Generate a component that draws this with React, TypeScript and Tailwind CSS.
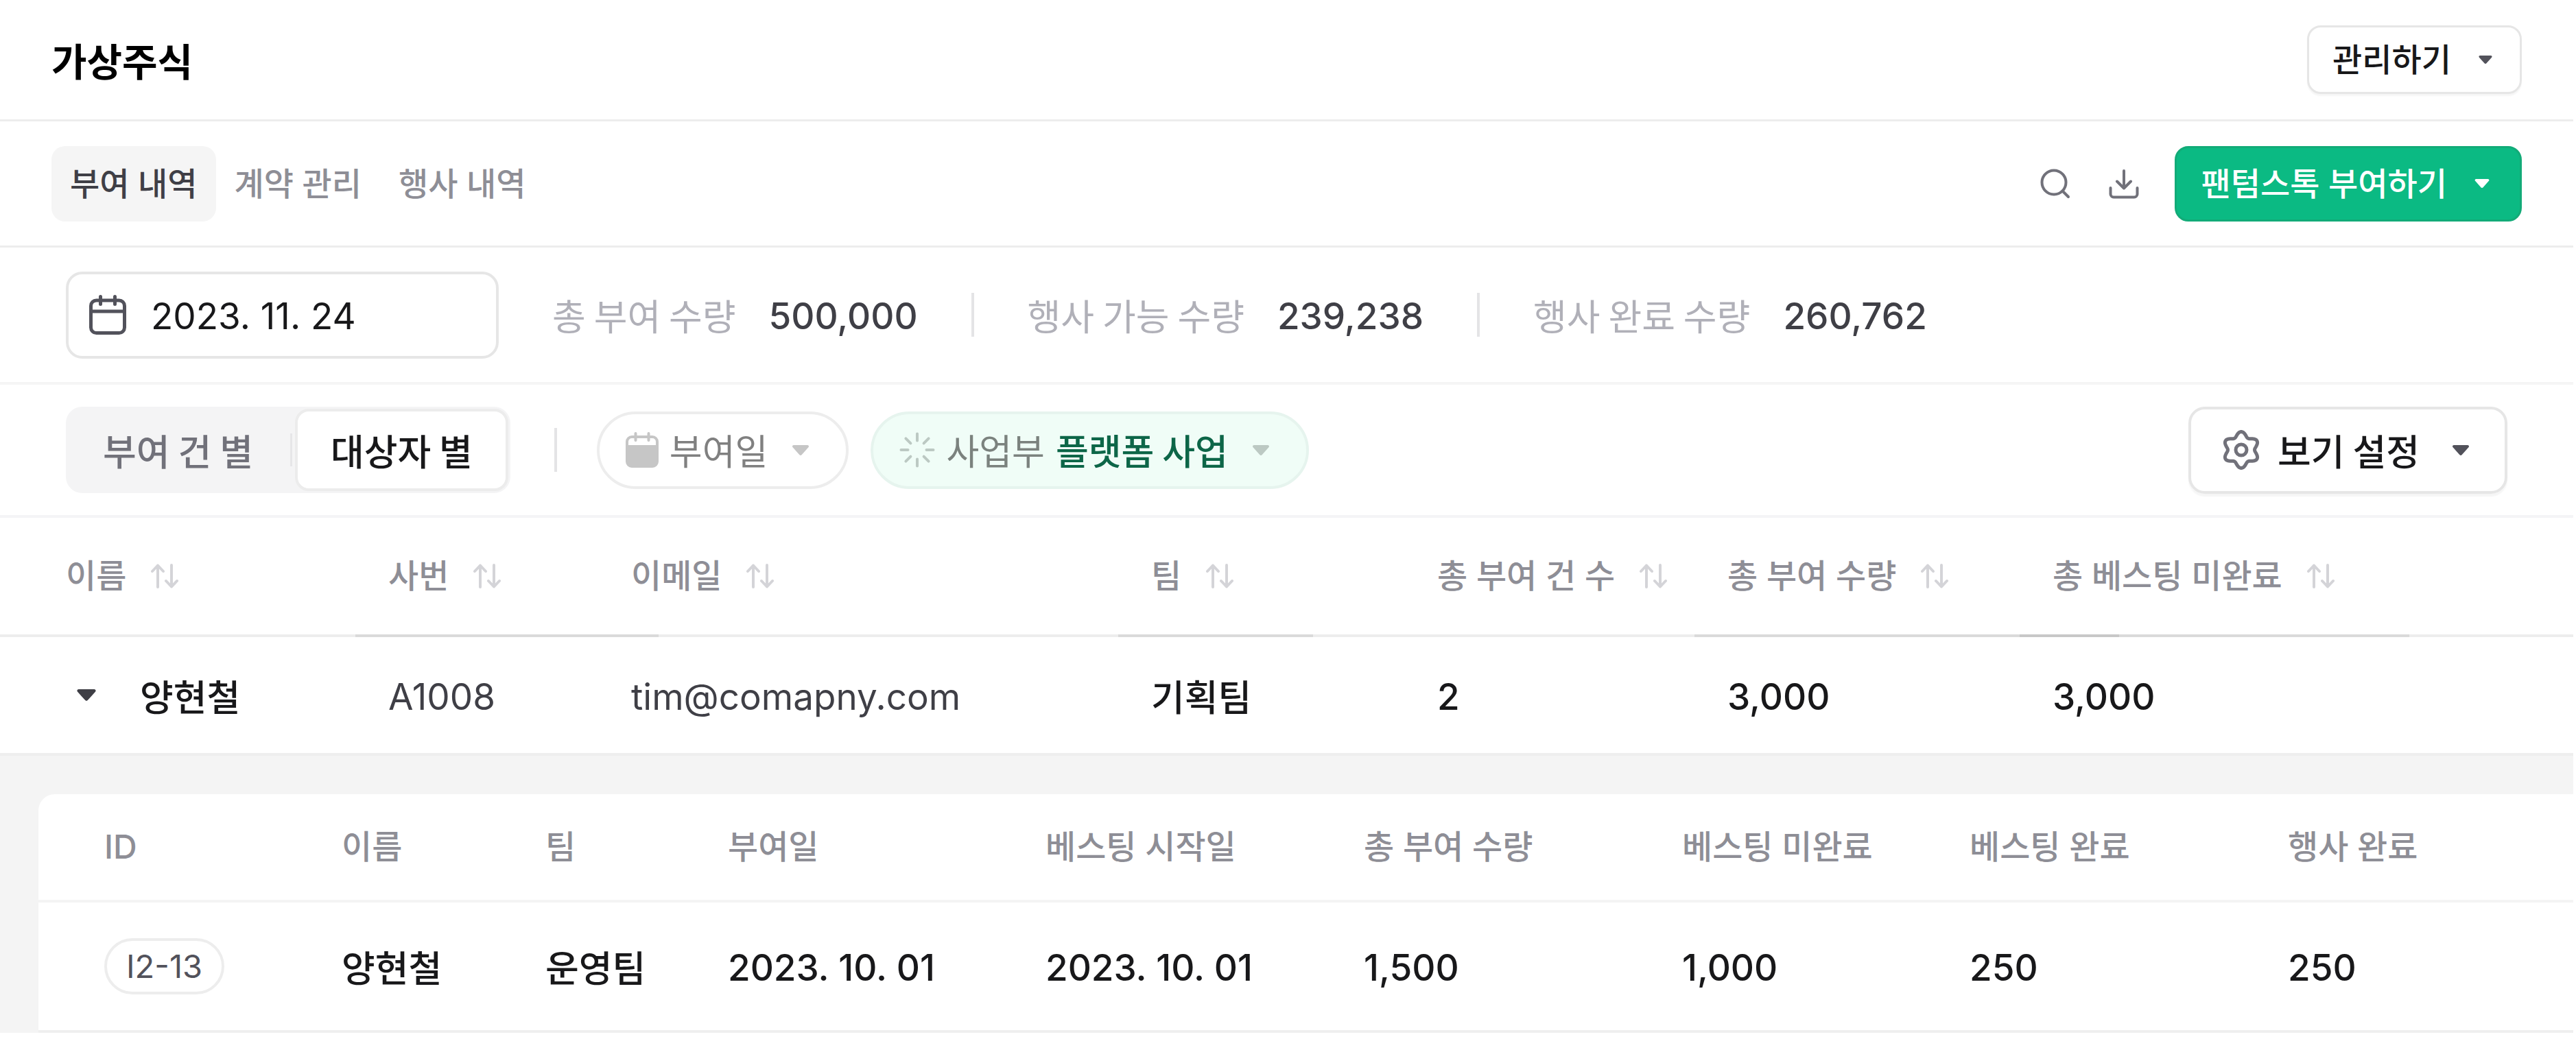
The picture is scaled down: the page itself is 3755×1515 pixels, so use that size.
import React, { ReactNode } from 'react';
import clsx from 'clsx';

// KR sets running Hangul, UI sets labels on the latin baseline, NUM is for figures
const KR = "font-['Noto_Sans_CJK_KR',sans-serif]";
const UI = "font-['Inter','Noto_Sans_CJK_KR',sans-serif]";
const NUM = "font-['Inter','Noto_Sans_CJK_KR',sans-serif] pt-1";

interface IconProps {
  className?: string;
}

const Caret: React.FC<IconProps> = ({ className }) => (
  <svg viewBox="0 0 24 15" className={clsx('flex-none', className)} fill="currentColor" aria-hidden="true">
    <path d="M2 0h20c1.800 0 2.600 2 1.400 3.300L13.800 14c-1 1.200-2.600 1.200-3.600 0L.6 3.300C-.6 2 .2 0 2 0z" />
  </svg>
);

const SearchIcon: React.FC<IconProps> = ({ className }) => (
  <svg viewBox="0 0 44 44" className={className} fill="none" stroke="currentColor" strokeWidth="4" strokeLinecap="round" aria-hidden="true">
    <circle cx="20" cy="20" r="17.500" />
    <path d="M32.500 32.500 41 41" />
  </svg>
);

const DownloadIcon: React.FC<IconProps> = ({ className }) => (
  <svg viewBox="0 0 44 44" className={className} fill="none" stroke="currentColor" strokeWidth="4" strokeLinecap="round" strokeLinejoin="round" aria-hidden="true">
    <path d="M22 3v25M12 18.500l10 10 10-10" />
    <path d="M2.500 28v9a4.500 4.500 0 0 0 4.500 4.500h30a4.500 4.500 0 0 0 4.500-4.500v-9" />
  </svg>
);

const CalendarIcon: React.FC<IconProps> = ({ className }) => (
  <svg viewBox="0 0 54 58" className={className} fill="none" stroke="currentColor" strokeWidth="5" strokeLinecap="round" aria-hidden="true">
    <rect x="2.500" y="8" width="49" height="47.500" rx="8" />
    <path d="M3 24h48" strokeLinecap="butt" />
    <path d="M16.500 2.500v11M37.500 2.500v11" />
  </svg>
);

const CalendarSolidIcon: React.FC<IconProps> = ({ className }) => (
  <svg viewBox="0 0 48 52" className={className} aria-hidden="true">
    <rect x="2" y="7" width="44" height="43" rx="7" fill="none" stroke="currentColor" strokeWidth="4" />
    <path d="M1 19h46v25a7 7 0 0 1-7 7H8a7 7 0 0 1-7-7z" fill="currentColor" />
    <path d="M14.500 2v10M33.500 2v10" stroke="currentColor" strokeWidth="4" strokeLinecap="round" />
  </svg>
);

const SpinnerIcon: React.FC<IconProps> = ({ className }) => (
  <svg viewBox="0 0 52 52" className={className} stroke="currentColor" strokeWidth="4" strokeLinecap="round" aria-hidden="true">
    <path d="M26 2.500v10M26 39.500v10M2.500 26h10M39.500 26h10M9.400 9.400l7 7M35.600 35.600l7 7M9.400 42.600l7-7M35.600 16.400l7-7" />
  </svg>
);

// Six soft lobes around the hub, first one pointing up
const gearPoints = Array.from({ length: 120 }, (_, i) => {
  const a = (i / 120) * Math.PI * 2;
  const r = 23 + 3.5 * Math.cos(6 * a);
  return `${(29 + r * Math.sin(a)).toFixed(2)},${(29 - r * Math.cos(a)).toFixed(2)}`;
}).join(' ');

const GearIcon: React.FC<IconProps> = ({ className }) => (
  <svg viewBox="0 0 58 58" className={className} fill="none" stroke="currentColor" strokeWidth="5" strokeLinejoin="round" aria-hidden="true">
    <polygon points={gearPoints} />
    <circle cx="29" cy="29" r="8" />
  </svg>
);

const SortIcon: React.FC<IconProps> = ({ className }) => (
  <svg viewBox="0 0 40 36" className={className} fill="none" stroke="currentColor" strokeWidth="4" strokeLinecap="round" strokeLinejoin="round" aria-hidden="true">
    <path d="M10 34V2.500M2 11l8-8.500L18 11" />
    <path d="M30 2v31.500M22 25l8 8.500 8-8.500" />
  </svg>
);

interface StatProps {
  label: string;
  value: string;
}

const Stat: React.FC<StatProps> = ({ label, value }) => (
  <div className="flex items-center gap-12">
    <dt className="text-[#b0b0b8]">{label}</dt>
    <dd className={clsx(NUM, 'font-medium text-[#3f3f46]')}>{value}</dd>
  </div>
);

const Divider = () => <div className="h-16 w-1 flex-none bg-[#e4e4e6]" />;

interface FilterPillProps {
  icon: ReactNode;
  active?: boolean;
  children: ReactNode;
}

const FilterPill: React.FC<FilterPillProps> = ({ icon, active = false, children }) => (
  <button
    type="button"
    aria-haspopup="listbox"
    className={clsx(
      'flex h-[113px] items-center rounded-full border-4 pl-[38px] pr-[54px] text-[52px]',
      active ? 'border-[#e6f4ee] bg-[#f0fdf7] text-[#7b827e]' : 'border-[#ededed] text-[#808080]'
    )}
  >
    <span className={clsx('flex-none', active ? 'text-[#bcc9c3]' : 'text-[#c6c6c6]')}>{icon}</span>
    <span className="ml-4 flex gap-4">{children}</span>
    <Caret className={clsx('ml-9 h-[15px] w-6', active ? 'text-[#bcc9c3]' : 'text-[#c6c6c6]')} />
  </button>
);

const tabs = ['부여 내역', '계약 관리', '행사 내역'];

const stats: StatProps[] = [
  { label: '총 부여 수량', value: '500,000' },
  { label: '행사 가능 수량', value: '239,238' },
  { label: '행사 완료 수량', value: '260,762' }
];

// marker = the darker stretch of the header rule under a column
const columns = [
  { label: '이름', col: 'w-[518px]', marker: '' },
  { label: '사번', col: 'w-[354px]', marker: 'w-[442px]' },
  { label: '이메일', col: 'w-[758px]', marker: '' },
  { label: '팀', col: 'w-[417px]', marker: 'w-[284px]' },
  { label: '총 부여 건 수', col: 'w-[423px]', marker: '' },
  { label: '총 부여 수량', col: 'w-[474px]', marker: 'w-[619px]' },
  { label: '총 베스팅 미완료', col: '', marker: 'w-[568px]' }
];

const grantColumns = [
  { label: 'ID', col: 'w-[442px]' },
  { label: '이름', col: 'w-[297px]' },
  { label: '팀', col: 'w-[266px]' },
  { label: '부여일', col: 'w-[463px]' },
  { label: '베스팅 시작일', col: 'w-[464px]' },
  { label: '총 부여 수량', col: 'w-[464px]' },
  { label: '베스팅 미완료', col: 'w-[419px]' },
  { label: '베스팅 완료', col: 'w-[464px]' },
  { label: '행사 완료', col: '' }
];

const grants = [
  {
    id: 'I2-13',
    name: '양현철',
    team: '운영팀',
    values: ['2023. 10. 01', '2023. 10. 01', '1,500', '1,000', '250', '250']
  }
];

const GrantTable = () => (
  <table className="w-full table-fixed border-separate border-spacing-0 text-left">
    <colgroup>
      {grantColumns.map((c) => (
        <col key={c.label} className={c.col} />
      ))}
    </colgroup>
    <thead>
      <tr className={clsx(UI, 'h-[158px] text-[48px] leading-[60px] text-[#8e8e96]')}>
        {grantColumns.map((c, i) => (
          <th key={c.label} className={clsx('whitespace-nowrap border-b-4 border-[#f4f4f4] p-0 font-medium', i === 0 && 'pl-24')}>
            {c.label}
          </th>
        ))}
      </tr>
    </thead>
    <tbody>
      {grants.map((g) => (
        <tr key={g.id} className="h-[190px] text-[53px] leading-[64px] text-[#18181a]">
          <td className="border-b-4 border-[#efefef] p-0 pl-24">
            <span className={clsx(UI, 'inline-flex h-[82px] items-center rounded-full border-4 border-[#ededed] px-7 text-[47px] text-[#52525b]')}>
              {g.id}
            </span>
          </td>
          <td className="border-b-4 border-[#efefef] p-0 font-medium">{g.name}</td>
          <td className="border-b-4 border-[#efefef] p-0 font-medium">{g.team}</td>
          {g.values.map((v, i) => (
            <td key={i} className={clsx(NUM, 'whitespace-nowrap border-b-4 border-[#efefef] px-0 pb-0 font-medium')}>
              {v}
            </td>
          ))}
        </tr>
      ))}
    </tbody>
  </table>
);

export default function App() {
  return (
    <div className={clsx(KR, 'min-h-screen overflow-x-hidden bg-white pr-1 text-[#18181a]')}>
      {/* Page header */}
      <header className="flex h-[177px] items-center justify-between border-b-[3px] border-[#ededed] px-[75px]">
        <h1 className="text-[56px] font-bold leading-[64px] text-black">가상주식</h1>
        <button
          type="button"
          aria-haspopup="menu"
          className={clsx(
            UI,
            'flex h-[100px] items-center gap-10 rounded-[20px] border-[3px] border-[#e6e6e6] pl-[34px] pr-10 text-[47px] font-medium leading-[60px] shadow-[0_3px_2px_rgba(0,0,0,0.04)]'
          )}
        >
          관리하기
          <Caret className="h-3 w-5 text-[#52525b]" />
        </button>
      </header>

      {/* Tabs and page actions */}
      <div className={clsx(UI, 'flex h-[184px] items-center justify-between border-b-[3px] border-[#ededed] px-[75px] text-[47px] font-medium leading-[60px]')}>
        <nav className="flex">
          {tabs.map((t, i) => (
            <a
              key={t}
              href="#"
              aria-current={i === 0 ? 'page' : undefined}
              className={clsx(
                'flex h-[110px] items-center rounded-[20px] px-[27px]',
                i === 0 ? 'bg-[#f5f5f5] text-[#3f3f46]' : 'text-[#8e8e96]'
              )}
            >
              {t}
            </a>
          ))}
        </nav>
        <div className="flex items-center text-[#71717a]">
          <button type="button" aria-label="검색">
            <SearchIcon className="size-11" />
          </button>
          <button type="button" aria-label="다운로드" className="ml-14">
            <DownloadIcon className="size-11" />
          </button>
          <button
            type="button"
            aria-haspopup="menu"
            className="ml-[52px] flex h-[110px] items-center gap-10 rounded-[20px] border-[3px] border-[#12ab78] bg-[#0bba83] pl-9 pr-11 text-white"
          >
            팬텀스톡 부여하기
            <Caret className="h-[13px] w-[22px]" />
          </button>
        </div>
      </div>

      {/* Base date and totals */}
      <div className="flex h-[200px] items-center border-b-4 border-[#f5f5f5] pl-24 text-[53px] leading-[64px]">
        <label className="flex h-[127px] w-[631px] items-center gap-9 rounded-3xl border-4 border-[#e6e6e6] pl-[30px] pr-6">
          <CalendarIcon className="h-[58px] w-[54px] flex-none text-[#52525b]" />
          <input
            type="text"
            aria-label="기준일"
            defaultValue="2023. 11. 24"
            className={clsx(NUM, 'w-full min-w-0 bg-transparent outline-none')}
          />
        </label>
        <dl className="ml-[78px] flex items-center gap-[78px]">
          {stats.map((s, i) => (
            <React.Fragment key={s.label}>
              {i > 0 && <Divider />}
              <Stat {...s} />
            </React.Fragment>
          ))}
        </dl>
      </div>

      {/* Grouping and filters */}
      <div className="flex h-[194px] items-center justify-between border-b-4 border-[#f4f4f6] px-24 text-[53px] leading-[64px]">
        <div className="flex items-center">
          <div className="flex h-[126px] items-center rounded-3xl bg-[#f4f4f5] pr-[3px]">
            <button type="button" aria-pressed="false" className="px-[54px] font-medium text-[#71717a]">
              부여 건 별
            </button>
            <span className="mr-1 h-12 w-[3px] bg-[#e6e6e8]" />
            <button
              type="button"
              aria-pressed="true"
              className="h-[120px] rounded-[20px] border-4 border-[#ececec] bg-white px-12 font-medium"
            >
              대상자 별
            </button>
          </div>
          <div className="ml-16 mr-[58px]">
            <Divider />
          </div>
          <div className="flex gap-8">
            <FilterPill icon={<CalendarSolidIcon className="h-[52px] w-12" />}>
              <span>부여일</span>
            </FilterPill>
            <FilterPill active icon={<SpinnerIcon className="size-[52px]" />}>
              <span>사업부</span>
              <span className="font-medium text-[#0d6648]">플랫폼 사업</span>
            </FilterPill>
          </div>
        </div>
        <button
          type="button"
          aria-haspopup="menu"
          className="flex h-[127px] items-center rounded-3xl border-4 border-[#e6e6e6] pl-11 pr-[52px] font-medium shadow-[0_4px_2px_rgba(0,0,0,0.04)]"
        >
          <GearIcon className="size-[58px] text-[#71717a]" />
          <span className="ml-6">보기 설정</span>
          <Caret className="ml-12 h-[15px] w-6 text-[#52525b]" />
        </button>
      </div>

      {/* People table */}
      <table className="w-full table-fixed border-separate border-spacing-0 text-left">
        <colgroup>
          {columns.map((c) => (
            <col key={c.label} className={c.col} />
          ))}
        </colgroup>
        <thead>
          <tr className={clsx(UI, 'h-[174px] text-[48px] leading-[60px] text-[#8e8e96]')}>
            {columns.map((c, i) => (
              <th
                key={c.label}
                className={clsx('relative whitespace-nowrap border-b-4 border-[#ededed] p-0 font-medium', i === 0 ? 'pl-24' : 'pl-12')}
              >
                <button type="button" className="flex items-center gap-9">
                  {c.label}
                  <SortIcon className="h-9 w-10 text-[#d4d4d8]" />
                </button>
                {c.marker && <span className={clsx('absolute -bottom-1 left-0 z-10 h-1 bg-black/8', c.marker)} />}
              </th>
            ))}
          </tr>
        </thead>
        <tbody>
          <tr className="h-[173px] text-[53px] leading-[64px]">
            <td className="border-b-4 border-[#eeeeee] p-0 pl-28 font-medium">
              <div className="flex items-center gap-16">
                <button type="button" aria-label="접기" aria-expanded="true">
                  <Caret className="h-[17px] w-7 text-[#3f3f46]" />
                </button>
                양현철
              </div>
            </td>
            <td className={clsx(NUM, 'border-b-4 border-[#eeeeee] pb-0 pl-12 pr-0 text-[#3f3f46]')}>A1008</td>
            <td className={clsx(NUM, 'border-b-4 border-[#eeeeee] pb-0 pl-12 pr-0 text-[#3f3f46]')}>tim@comapny.com</td>
            <td className="border-b-4 border-[#eeeeee] p-0 pl-12 font-medium">기획팀</td>
            <td className={clsx(NUM, 'border-b-4 border-[#eeeeee] pb-0 pl-12 pr-0 font-medium')}>2</td>
            <td className={clsx(NUM, 'border-b-4 border-[#eeeeee] pb-0 pl-12 pr-0 font-medium')}>3,000</td>
            <td className={clsx(NUM, 'border-b-4 border-[#eeeeee] pb-0 pl-12 pr-0 font-medium')}>3,000</td>
          </tr>
          {/* Expanded grants of the row above */}
          <tr>
            <td colSpan={7} className="bg-[#f4f4f4] p-0 pl-14 pt-14">
              <div className="overflow-hidden rounded-tl-3xl bg-white">
                <GrantTable />
              </div>
            </td>
          </tr>
        </tbody>
      </table>
    </div>
  );
}
